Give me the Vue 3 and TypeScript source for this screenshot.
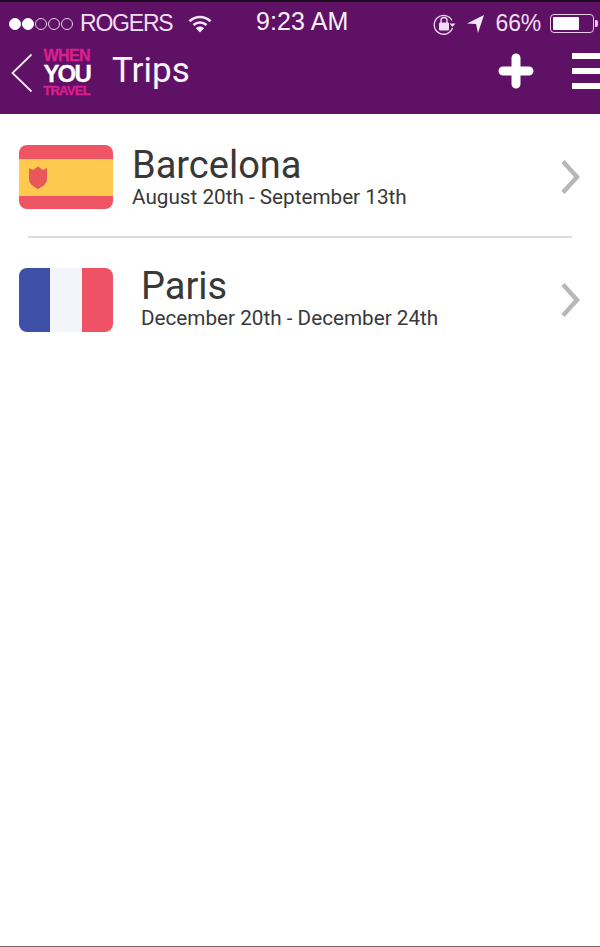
<script setup lang="ts">
interface Trip {
  city: string
  dates: string
  flag: 'spain' | 'france'
}

const trips: Trip[] = [
  { city: 'Barcelona', dates: 'August 20th - September 13th', flag: 'spain' },
  { city: 'Paris', dates: 'December 20th - December 24th', flag: 'france' },
]
</script>

<template>
  <div class="screen">
    <header class="top">
      <div class="status">
        <div class="status-left">
          <span class="dots">
            <i class="dot on"></i><i class="dot on"></i><i class="dot"></i><i class="dot"></i><i class="dot"></i>
          </span>
          <span class="carrier">ROGERS</span>
          <svg class="wifi" width="24" height="18" viewBox="0 0 24 18">
            <path d="M1.500 6.200C7.500 .6 16.500 .6 22.500 6.200" fill="none" stroke="#f3e6f2" stroke-width="2.600" />
            <path d="M5.500 10C9.300 6.600 14.700 6.600 18.500 10" fill="none" stroke="#f3e6f2" stroke-width="2.600" />
            <path d="M12 17.500L7.800 13.200C10.300 11 13.700 11 16.200 13.200Z" fill="#f3e6f2" />
          </svg>
        </div>
        <span class="time">9:23 AM</span>
        <div class="status-right">
          <svg class="lock" width="24" height="24" viewBox="0 0 24 24">
            <path d="M20 8.500A9.400 9.400 0 1 0 20.500 16" fill="none" stroke="#f0dcef" stroke-width="1.300" />
            <path d="M17.500 11.500H23.500L20.500 15Z" fill="#f0dcef" />
            <rect x="7" y="10.500" width="10" height="8" rx="1" fill="#f0dcef" />
            <path d="M9 11V8.500a3 3 0 0 1 6 0V11" fill="none" stroke="#f0dcef" stroke-width="1.400" />
          </svg>
          <svg class="arrow" width="17" height="18" viewBox="0 0 17 18">
            <path d="M0 8.500L17 0L11 18L9 9Z" fill="#f5eaf4" />
          </svg>
          <span class="percent">66%</span>
          <span class="battery"><span class="charge"></span></span>
          <span class="nub"></span>
        </div>
      </div>
      <nav class="nav">
        <svg class="back" width="24" height="40" viewBox="0 0 24 40">
          <path d="M21.500 1.500L2.500 20L21.500 38.500" fill="none" stroke="#f4e8f3" stroke-width="1.800" />
        </svg>
        <div class="logo">
          <span class="logo-small">WHEN</span>
          <span class="logo-big">YOU</span>
          <span class="logo-small tight">TRAVEL</span>
        </div>
        <h1 class="title">Trips</h1>
        <div class="actions">
          <svg class="plus" width="36" height="36" viewBox="0 0 36 36">
            <path d="M18 5V31M5 18H31" fill="none" stroke="#fff" stroke-width="9" stroke-linecap="round" />
          </svg>
          <div class="menu"><i></i><i></i><i></i></div>
        </div>
      </nav>
    </header>

    <main class="list">
      <template v-for="(trip, i) in trips" :key="trip.city">
        <div v-if="i > 0" class="divider"></div>
        <div class="row" :class="trip.flag">
          <div class="flag" :class="'flag-' + trip.flag">
            <template v-if="trip.flag === 'spain'">
              <svg class="crest" width="20" height="23" viewBox="0 0 20 23">
                <path d="M1 2L5 4L10 0.500L15 4L19 2V13C19 18 14 21 10 23C6 21 1 18 1 13Z" fill="#e8585a" />
              </svg>
            </template>
            <template v-else>
              <i class="blue"></i><i class="white"></i><i class="red"></i>
            </template>
          </div>
          <div class="info">
            <div class="city">{{ trip.city }}</div>
            <div class="dates">{{ trip.dates }}</div>
          </div>
          <svg class="chevron" width="20" height="36" viewBox="0 0 20 36">
            <path d="M3 2.500L17 18L3 33.500" fill="none" stroke="#b7b7b7" stroke-width="4.500" />
          </svg>
        </div>
      </template>
    </main>
  </div>
</template>

<style scoped>
.screen {
  width: 600px;
  height: 947px;
  display: flex;
  flex-direction: column;
  background: #fff;
  border-bottom: 1px solid #6b6b6b;
  box-sizing: border-box;
  overflow: hidden;
  font-family: Roboto, "Liberation Sans", sans-serif;
}

.top {
  height: 114px;
  flex: none;
  background: #5f1166;
  border-top: 2px solid #1c0a1e;
  box-sizing: border-box;
  color: #fff;
}

.status {
  height: 41px;
  display: flex;
  align-items: center;
  justify-content: space-between;
  padding: 1px 2px 0 9px;
  font-family: "Liberation Sans", Arial, sans-serif;
  font-size: 23px;
  color: #f0dfef;
  position: relative;
}

.status-left,
.status-right {
  display: flex;
  align-items: center;
}

.dots {
  display: flex;
  gap: 1px;
  margin-right: 7px;
}

.dot {
  width: 12px;
  height: 12px;
  box-sizing: border-box;
  border: 1px solid #e6cfe5;
  border-radius: 50%;
}

.dot.on {
  background: #fff;
  border-color: #fff;
}

.carrier {
  letter-spacing: -1.200px;
}

.wifi {
  margin-left: 16px;
}

.time {
  position: absolute;
  left: 256px;
  top: 5px;
  font-size: 25px;
  color: #f7eff6;
  letter-spacing: 0.100px;
}

.lock {
  margin-right: 11px;
}

.arrow {
  margin-right: 12px;
}

.percent {
  margin-right: 9px;
  letter-spacing: -0.200px;
}

.battery {
  width: 44px;
  height: 19px;
  border: 1px solid #e6cfe5;
  border-radius: 4px;
  padding: 2px;
  box-sizing: border-box;
  display: flex;
}

.charge {
  width: 26px;
  background: #fff;
  border-radius: 1px;
}

.nub {
  width: 3px;
  height: 7px;
  margin-left: 1px;
  background: #e6cfe5;
  border-radius: 0 2px 2px 0;
}

.nav {
  height: 71px;
  display: flex;
  align-items: center;
  padding: 0 0 14px 10px;
  box-sizing: border-box;
}

.logo {
  width: 50px;
  margin-left: 6px;
  display: flex;
  flex-direction: column;
  align-items: flex-end;
  font-family: "Liberation Sans", Arial, sans-serif;
  font-weight: 700;
  -webkit-text-stroke: 0.300px currentColor;
}

.logo-small {
  font-size: 16px;
  line-height: 15px;
  letter-spacing: -0.600px;
  color: #dc1f8c;
}

.logo-small.tight {
  font-size: 13px;
  line-height: 12px;
  margin-top: 1px;
  letter-spacing: -0.700px;
}

.logo-big {
  font-size: 24px;
  line-height: 21px;
  letter-spacing: -1.800px;
  color: #fff;
}

.title {
  margin: -4px 0 0 22px;
  font-size: 35px;
  font-weight: 400;
  color: #fbf5fb;
}

.actions {
  margin-left: auto;
  display: flex;
  align-items: center;
  gap: 38px;
  margin-top: -3px;
}

.plus {
  display: block;
}

.menu {
  width: 28px;
  display: flex;
  flex-direction: column;
  gap: 9px;
}

.menu i {
  height: 6px;
  background: #fff;
}

.list {
  padding-top: 31px;
  display: flex;
  flex-direction: column;
}

.row {
  display: flex;
  align-items: center;
  height: 64px;
  padding: 0 20px 0 19px;
}

.divider {
  height: 2px;
  margin: 27px 28px 30px;
  background: #dcdcdc;
}

.flag {
  width: 94px;
  height: 64px;
  flex: none;
  border-radius: 8px;
  overflow: hidden;
}

.flag-spain {
  background: linear-gradient(#ee5462 0 14px, #fdca4f 14px 51px, #ee5462 51px);
  display: flex;
  align-items: center;
  padding-left: 9px;
  box-sizing: border-box;
}

.flag-france {
  display: flex;
}

.flag-france i {
  flex: 1;
}

.blue {
  background: #3f50a8;
}

.white {
  background: #f3f5fb;
}

.red {
  background: #ee5264;
}

.info {
  margin: 0 0 2px 19px;
  color: #383838;
}

.france .info {
  margin: 0 0 5px 28px;
}

.city {
  font-size: 38px;
  line-height: 42px;
}

.dates {
  font-size: 20.700px;
  line-height: 24px;
  margin-top: -1px;
}

.chevron {
  margin-left: auto;
}
</style>

<style>
body {
  background: #fff;
}
</style>
